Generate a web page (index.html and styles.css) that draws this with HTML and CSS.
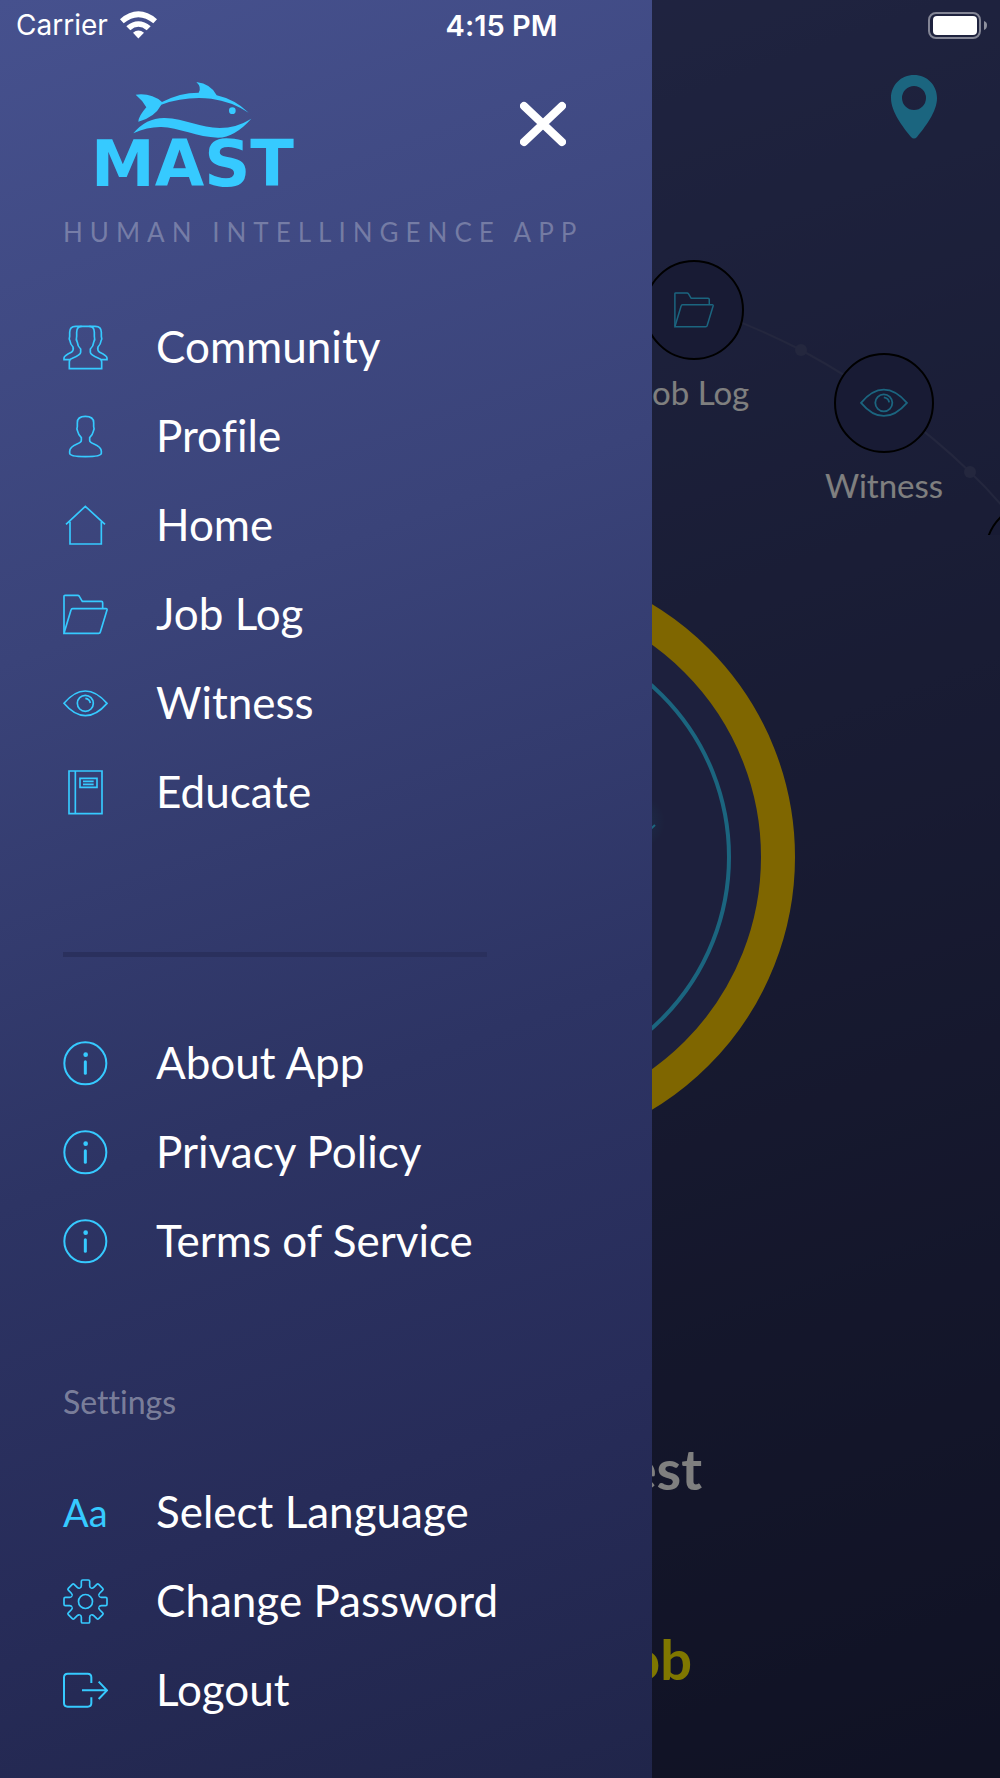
FILE: index.html
```html
<!DOCTYPE html>
<html lang="en">
<head>
    <meta charset="UTF-8">
    <meta name="viewport" content="width=device-width, initial-scale=1.0">
    <title>MAST</title>
    <link rel="stylesheet" href="styles.css">
</head>
<body>
    <!-- shared icons -->
    <svg class="sprite" aria-hidden="true">
        <symbol id="i-community" viewBox="0 0 135 135">
            <path d="M19 131V110Q19 103 28 100Q53 90 53 82V72Q44 64 43 52Q38 44 41 34V22Q41 4 56 4H79Q94 4 94 22V34Q97 44 92 52Q91 64 82 72V82Q82 90 107 100Q116 103 116 110V131Z"/>
            <path d="M56 4H38Q20 4 20 22V34Q17 42 21 48Q22 58 30 66Q33 76 25 82Q3 93 3 99V104H22"/>
            <path d="M79 4H97Q115 4 115 22V34Q118 42 114 48Q113 58 105 66Q102 76 110 82Q132 93 132 99V104H113"/>
        </symbol>
        <symbol id="i-profile" viewBox="0 0 135 135">
            <path d="M67 7Q43 7 43 26V38Q40 44 44 52Q46 62 55 71V79Q55 86 42 90Q20 99 20 112V118Q20 128 67 128Q115 128 115 118V112Q115 99 93 90Q80 86 80 79V71Q89 62 91 52Q95 44 92 38V26Q92 7 67 7Z"/>
        </symbol>
        <symbol id="i-home" viewBox="0 0 135 135">
            <path d="M9 64L67 10L126 64M21 56V123H115V56"/>
        </symbol>
        <symbol id="i-folder" viewBox="0 0 135 135">
            <path d="M3 122V12Q3 10 6 10H44Q47 10 49 13L58 28H115Q119 28 119 32V50"/>
            <path d="M3 124L24 54Q25 50 29 50H129Q133 50 132 54L112 120Q111 124 107 124Z"/>
        </symbol>
        <symbol id="i-eye" viewBox="0 0 135 135">
            <path d="M3 67Q34 30 67 30Q100 30 132 67Q100 104 67 104Q34 104 3 67Z"/>
            <circle cx="67" cy="67" r="24"/>
            <path d="M67 52Q80 54 82 66"/>
        </symbol>
        <symbol id="i-book" viewBox="0 0 135 135">
            <path d="M18 3H117V131H18ZM37 3V131M51 25H102V52H51ZM60 34H92M60 43H92"/>
        </symbol>
        <symbol id="i-info" viewBox="0 0 135 135">
            <circle cx="67" cy="67" r="63" stroke-width="6"/>
            <path d="M67 62V97" stroke-width="9" stroke-linecap="round"/>
            <circle cx="68" cy="41" r="7" fill="currentColor" stroke="none"/>
        </symbol>
        <symbol id="i-gear" viewBox="0 0 135 135">
            <g id="tooth"><path d="M51 27Q55 25 55 20V7Q55 3 59 3H76Q80 3 80 7V20Q80 25 84 27"/></g>
            <use href="#tooth" transform="rotate(45 67.5 67.5)"/>
            <use href="#tooth" transform="rotate(90 67.5 67.5)"/>
            <use href="#tooth" transform="rotate(135 67.5 67.5)"/>
            <use href="#tooth" transform="rotate(180 67.5 67.5)"/>
            <use href="#tooth" transform="rotate(225 67.5 67.5)"/>
            <use href="#tooth" transform="rotate(270 67.5 67.5)"/>
            <use href="#tooth" transform="rotate(315 67.5 67.5)"/>
            <circle cx="67.5" cy="67.5" r="21"/>
        </symbol>
        <symbol id="i-logout" viewBox="0 0 135 135">
            <path stroke-width="6" d="M85 45V28Q85 17 74 17H14Q3 17 3 28V105Q3 116 14 116H74Q85 116 85 105V88M57 67H131M107 41L132 67L107 93"/>
        </symbol>
    </svg>

    <div class="screen">
        <main class="home">
            <div class="home-bar">
                <button class="pin" aria-label="Location">
                    <svg viewBox="0 0 46 64" width="46" height="64"><path fill="currentColor" fill-rule="evenodd" d="M23 0C10 0 0 10 0 23C0 37 12 52 20 62Q23 65 26 62C34 52 46 37 46 23C46 10 36 0 23 0ZM23 11A12 12 0 1 1 23 35A12 12 0 1 1 23 11Z"/></svg>
                </button>
            </div>

            <div class="arc">
                <svg class="arc-line" viewBox="0 0 1000 395" preserveAspectRatio="none">
                    <path d="M694 164Q750 184 801 210Q900 264 970 332Q1006 366 1035 410"/>
                    <circle cx="801" cy="210" r="6"/>
                    <circle cx="970" cy="332" r="6"/>
                </svg>
                <a href="#" class="node node-job">
                    <span class="node-circle"><svg class="icon"><use href="#i-folder"/></svg></span>
                    Job Log
                </a>
                <a href="#" class="node node-witness">
                    <span class="node-circle"><svg class="icon"><use href="#i-eye"/></svg></span>
                    Witness
                </a>
                <a href="#" class="node node-educate" aria-label="Educate">
                    <span class="node-circle"><svg class="icon"><use href="#i-book"/></svg></span>
                </a>
            </div>

            <svg class="ring" viewBox="0 0 590 590">
                <defs>
                    <radialGradient id="glow">
                        <stop offset="0" stop-color="#36caff" stop-opacity="0.2"/>
                        <stop offset="1" stop-color="#36caff" stop-opacity="0"/>
                    </radialGradient>
                </defs>
                <circle class="ring-outer" cx="295" cy="295" r="278"/>
                <circle class="ring-inner" cx="295" cy="295" r="229"/>
                <circle cx="434" cy="260" r="26" fill="url(#glow)"/>
                <path class="ring-mark" d="M438 274L450 263"/>
            </svg>

            <h1 class="home-title">Interest</h1>
            <a href="#" class="home-action">Job</a>
        </main>

        <div class="backdrop"></div>

        <nav class="drawer">
            <div class="drawer-head">
                <div class="logo">
                    <svg class="fish" viewBox="405 243 357 171" width="119" height="57">
                        <path d="M413 284Q460 278 492 306Q545 278 602 278Q612 262 595 246Q640 252 656 286Q710 298 752 338Q700 304 640 296Q560 288 490 314Q470 352 421 365Q422 348 445 322Q433 300 413 284Z"/>
                        <path d="M406 400Q445 353 500 354C560 356 610 384 665 384Q715 384 760 356Q710 412 660 413C600 412 540 382 490 381Q450 380 406 400Z"/>
                        <circle cx="703" cy="332" r="10"/>
                    </svg>
                    <span class="logo-name">MAST</span>
                </div>
                <button class="close" aria-label="Close menu">
                    <svg viewBox="0 0 46 46" width="46" height="46"><path d="M4 5L42 41M42 5L4 41"/></svg>
                </button>
            </div>
            <p class="tagline">HUMAN INTELLINGENCE APP</p>

            <ul class="menu">
                <li><a href="#"><svg class="icon"><use href="#i-community"/></svg>Community</a></li>
                <li><a href="#"><svg class="icon"><use href="#i-profile"/></svg>Profile</a></li>
                <li><a href="#"><svg class="icon"><use href="#i-home"/></svg>Home</a></li>
                <li><a href="#"><svg class="icon"><use href="#i-folder"/></svg>Job Log</a></li>
                <li><a href="#"><svg class="icon"><use href="#i-eye"/></svg>Witness</a></li>
                <li><a href="#"><svg class="icon"><use href="#i-book"/></svg>Educate</a></li>
            </ul>

            <hr class="divider">

            <ul class="menu">
                <li><a href="#"><svg class="icon"><use href="#i-info"/></svg>About App</a></li>
                <li><a href="#"><svg class="icon"><use href="#i-info"/></svg>Privacy Policy</a></li>
                <li><a href="#"><svg class="icon"><use href="#i-info"/></svg>Terms of Service</a></li>
            </ul>

            <h2 class="menu-title">Settings</h2>

            <ul class="menu">
                <li><a href="#"><span class="icon icon-text">Aa</span>Select Language</a></li>
                <li><a href="#"><svg class="icon"><use href="#i-gear"/></svg>Change Password</a></li>
                <li><a href="#"><svg class="icon"><use href="#i-logout"/></svg>Logout</a></li>
            </ul>
        </nav>

        <div class="status-bar">
            <div class="carrier">
                Carrier
                <svg viewBox="360 29 111 83" width="37" height="28" fill="#fff">
                    <path d="M360 53Q415 6 471 53L460 65Q415 29 371 65Z"/>
                    <path d="M379 74Q415 44 452 74L440 86Q415 66 391 86Z"/>
                    <path d="M399 94Q415 80 432 94L415 111Z"/>
                </svg>
            </div>
            <div class="time">4:15 PM</div>
            <div class="battery">
                <svg viewBox="0 0 59 27" width="59" height="27">
                    <rect x="1" y="1" width="51" height="25" rx="7" fill="none" stroke="#fff" stroke-opacity="0.45" stroke-width="2"/>
                    <rect x="5" y="4" width="44" height="19" rx="4" fill="#fff"/>
                    <path d="M56 9Q59 10 59 13Q59 17 56 18Z" fill="#fff" fill-opacity="0.5"/>
                </svg>
            </div>
        </div>
    </div>
</body>
</html>
```
FILE: styles.css
```css
* {
    box-sizing: border-box;
}

body {
    margin: 0;
    font-family: Lato, "Liberation Sans", sans-serif;
    font-variant-ligatures: none;
    color: #fff;
}

a {
    color: inherit;
    text-decoration: none;
}

button {
    padding: 0;
    border: none;
    background: none;
    color: inherit;
    cursor: pointer;
}

svg {
    display: block;
}

.sprite {
    position: absolute;
    width: 0;
    height: 0;
}

/* everything is stacked in one grid cell */
.screen {
    display: grid;
    grid-template-columns: minmax(0, 1fr);
    min-height: 100vh;
}

.home,
.backdrop,
.drawer,
.status-bar {
    grid-area: 1 / 1;
    z-index: 1;
}

.icon {
    flex: none;
    width: 45px;
    height: 45px;
    color: #36caff;
    fill: none;
    stroke: currentColor;
    stroke-width: 5;
}

/* status bar */
.status-bar {
    display: grid;
    grid-template-columns: 1fr auto 1fr;
    align-items: center;
    align-self: start;
    height: 50px;
    padding: 0 13px 0 16px;
    font-family: Inter, "Liberation Sans", sans-serif;
    font-size: 28px;
}

.carrier {
    display: flex;
    align-items: center;
    gap: 12px;
}

.time {
    font-size: 29px;
    font-weight: 600;
}

.battery {
    justify-self: end;
}

/* home screen */
.home {
    display: flex;
    flex-direction: column;
    align-items: center;
    overflow: hidden;
    background: linear-gradient(160deg, #434c88 0%, #363d70 35%, #2e3360 60%, #202448 100%);
    z-index: 0;
}

.backdrop {
    background: rgba(0, 0, 0, 0.5);
}

.home-bar {
    display: flex;
    justify-content: flex-end;
    width: 100%;
    padding: 75px 63px 1px;
}

.pin {
    color: #36caff;
}

.arc {
    position: relative;
    width: 100%;
    height: 395px;
    overflow: hidden;
}

.arc-line {
    width: 100%;
    height: 100%;
    fill: #484e7c;
    stroke: none;
}

.arc-line path {
    fill: none;
    stroke: #484e7c;
    stroke-width: 2;
}

.node {
    position: absolute;
    display: flex;
    flex-direction: column;
    align-items: center;
    gap: 12px;
    width: 140px;
    margin-left: -70px;
    font-size: 33px;
    line-height: 40px;
}

.node-job {
    left: 69.4%;
    top: 120px;
}

.node-witness {
    left: 88.4%;
    top: 213px;
}

.node-educate {
    left: 103.5%;
    top: 362px;
}

.node-circle {
    display: flex;
    align-items: center;
    justify-content: center;
    width: 100px;
    height: 100px;
    border: 2px solid #000;
    border-radius: 50%;
    background: #303668;
}

.node .icon {
    width: 40px;
    height: 40px;
}

.node-witness .icon {
    width: 48px;
    height: 48px;
}

.ring {
    width: 590px;
    height: 590px;
    margin-top: 27px;
}

.ring-outer {
    fill: #3a417a;
    stroke: #ffcc00;
    stroke-width: 34;
}

.ring-inner {
    fill: none;
    stroke: #36caff;
    stroke-width: 4;
}

.ring-mark {
    stroke: #36caff;
    stroke-width: 2;
}

.home-title,
.home-action {
    width: 404px;
    font-size: 56px;
    font-weight: 700;
    line-height: 64px;
    text-align: right;
}

.home-title {
    margin: 285px 0 126px;
}

.home-action {
    width: 384px;
    color: #ffee00;
}

/* drawer */
.drawer {
    width: 65.2%;
    padding: 81px 63px 40px;
    background: linear-gradient(160deg, #46518e 0%, #3a4379 33%, #2d3464 60%, #272c59 80%, #20254a 100%);
}

.drawer-head {
    display: flex;
    justify-content: space-between;
    align-items: flex-start;
}

.logo {
    display: flex;
    flex-direction: column;
    align-items: center;
    padding-left: 28px;
    color: #36caff;
}

.fish {
    fill: currentColor;
}

.logo-name {
    font-family: "DejaVu Sans", sans-serif;
    font-size: 64px;
    font-weight: 700;
    line-height: 52px;
}

.close {
    margin: 20px 23px 0 0;
}

.close path {
    stroke: #fff;
    stroke-width: 8;
    stroke-linecap: round;
}

.tagline {
    margin: 26px 0 0;
    font-size: 26px;
    line-height: 32px;
    letter-spacing: 7px;
    white-space: nowrap;
    color: rgba(255, 255, 255, 0.28);
}

.menu {
    margin: 0;
    padding: 0;
    list-style: none;
    font-size: 44px;
}

.menu .icon {
    margin-top: 4px;
}

.tagline + .menu {
    margin-top: 53px;
}

.menu a {
    display: flex;
    align-items: center;
    gap: 48px;
    height: 89px;
    white-space: nowrap;
}

.icon-text {
    font-size: 38px;
    line-height: 45px;
}

.divider {
    width: 424px;
    max-width: 100%;
    height: 5px;
    margin: 117px 0 60px;
    border: none;
    background: #2a305d;
}

.menu-title {
    margin: 100px 0 46px;
    font-size: 32px;
    font-weight: 400;
    line-height: 36px;
    color: rgba(255, 255, 255, 0.4);
}
```
